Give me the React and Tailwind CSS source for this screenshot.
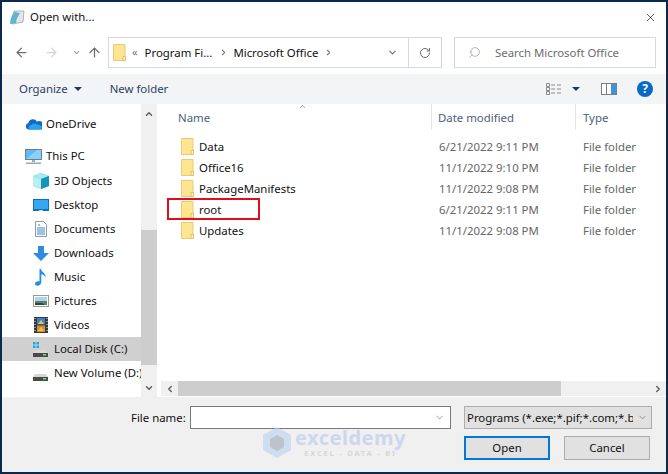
import React from 'react';
import { ArrowLeft, ArrowRight, ArrowUp, ChevronDown, ChevronUp, ChevronLeft, ChevronRight, RotateCw, Search, X } from 'lucide-react';

const files = [
  { name: 'Data', date: '6/21/2022 9:11 PM' },
  { name: 'Office16', date: '11/1/2022 9:10 PM' },
  { name: 'PackageManifests', date: '11/1/2022 9:08 PM' },
  { name: 'root', date: '6/21/2022 9:11 PM' },
  { name: 'Updates', date: '11/1/2022 9:08 PM' },
];

function Folder() {
  return (
    <svg width="13" height="17" viewBox="0 0 13 17" className="shrink-0">
      <path d="M.5.5h11.5v16H.5z" fill="#fde591" stroke="#e9cb73" />
      <path d="M10 12.500h2.500v4H10z" fill="#fff3c4" stroke="#e3bf5e" />
    </svg>
  );
}

function OneDriveIcon() {
  return (
    <svg width="17" height="12" viewBox="0 0 17 12">
      <path d="M4 11.500a3.300 3.300 0 0 1-.6-6.500 4.600 4.600 0 0 1 8.600-1.300 3.800 3.800 0 0 1 4.700 7.800z" fill="#0f6cc4" />
      <path d="M4 11.500h11.800c1-.6 1.200-2.300.6-3.300-1.200-1.700-4-1.300-5-1.900-2-1.500-4-1-5 .7-2.200 0-3.500 2.500-2.400 4.500z" fill="#2aa3ec" />
    </svg>
  );
}

function PcIcon() {
  return (
    <svg width="17" height="15" viewBox="0 0 17 15">
      <rect x=".5" y=".5" width="16" height="10" fill="#5fb9f2" stroke="#6b7f91" />
      <path d="M1 10 12 1h4v9z" fill="#8ad0f7" />
      <path d="M7 11h3v2H7z" fill="#9eb0be" />
      <path d="M1 13.500h15V15H1z" fill="#9aa9b5" />
    </svg>
  );
}

function CubeIcon() {
  return (
    <svg width="16" height="16" viewBox="0 0 16 16">
      <path d="M8 0 16 3v10l-8 3-8-3V3z" fill="#3dc3d8" />
      <path d="M8 0 16 3 8 6 0 3z" fill="#a5ecf2" />
      <path d="M0 3l8 3v10l-8-3z" fill="#b6f0f2" />
      <path d="M8 6l8-3v10l-8 3z" fill="#1595b5" />
    </svg>
  );
}

function DesktopIcon() {
  return (
    <svg width="16" height="12" viewBox="0 0 16 12">
      <rect width="16" height="12" fill="#0d6fbd" />
      <rect x="1" y="1" width="14" height="9" fill="#34a6f2" />
      <path d="M6 11h4v1H6z" fill="#bfe2f8" />
    </svg>
  );
}

function DocumentIcon() {
  return (
    <svg width="12" height="16" viewBox="0 0 12 16" className="ml-[2px]">
      <path d="M.5.5h8l3 3v12H.500z" fill="#fff" stroke="#8e9aa5" />
      <path d="M3 4h2M2 7h8M2 9h8M2 11h8M2 13h8" stroke="#3b87c6" />
    </svg>
  );
}

function DownloadIcon() {
  return (
    <svg width="16" height="15" viewBox="0 0 16 15">
      <path d="M5 0h6v7h5l-8 8-8-8h5z" fill="#2f8ae0" />
    </svg>
  );
}

function MusicIcon() {
  return (
    <svg width="12" height="17" viewBox="0 0 12 17" className="ml-[2px]">
      <path d="M4.500 0h1.500c.3 3 5 4 4.600 8.500C9.800 6.500 8 5.500 6.300 5.300V13c0 2.300-2 3.700-4 3.700-3 0-3-3.500-.3-4.300.8-.2 1.800-.2 2.500.2z" fill="#1f8fe8" />
    </svg>
  );
}

function PictureIcon() {
  return (
    <svg width="16" height="12" viewBox="0 0 16 12">
      <rect x=".5" y=".5" width="15" height="11" fill="#fff" stroke="#9a9a9a" />
      <rect x="2" y="2" width="12" height="4" fill="#a9d8ee" />
      <path d="M2 6h12v4H2z" fill="#5d8068" />
      <path d="M2 8h7l3 2H2z" fill="#2b4a3a" />
    </svg>
  );
}

function VideoIcon() {
  return (
    <svg width="14" height="16" viewBox="0 0 14 16" className="ml-px">
      <rect width="14" height="16" fill="#35393d" />
      <rect x="3" y="1" width="8" height="6.500" fill="#3a7fd0" />
      <rect x="3" y="8.500" width="8" height="6.500" fill="#d98d2e" />
      <path d="M4 7l3-4 3 4zM4 14l3-4 3 4z" fill="#e3c64a" />
      <path d="M1 1v1M1 4v1M1 7v1M1 10v1M1 13v1M13 1v1M13 4v1M13 7v1M13 10v1M13 13v1" stroke="#e5e5e5" />
    </svg>
  );
}

function DiskIcon({ windows }) {
  return (
    <svg width="15" height="15" viewBox="0 0 15 15">
      {windows && <path d="M0 0h2.500v2.500H0zM3.500 0H6v2.500H3.500zM0 3.500h2.500V6H0zM3.500 3.500H6V6H3.500z" fill="#19a7e8" />}
      <path d="M2 8h11l2 3H0z" fill="#d7d7d7" />
      <rect y="11" width="15" height="4" fill="#4a4a4a" />
      <rect x="10" y="12" width="3" height="1.500" fill="#7ed957" />
    </svg>
  );
}

function NavRow({ icon, label, indent, active }) {
  return (
    <div className={`flex items-center h-6 ${active ? 'bg-[#d0d0d0]' : ''} ${indent ? 'pl-[31px]' : 'pl-[23px]'}`}>
      <div className="w-[21px] shrink-0 flex items-center">{icon}</div>
      <span className="whitespace-nowrap">{label}</span>
    </div>
  );
}

export default function App() {
  return (
    <div className="w-[668px] h-[474px] relative overflow-hidden border-2 border-[#0b2a49] bg-white text-[11.4px] text-[#111] flex flex-col font-['Noto_Sans',sans-serif]">
      {/* title bar */}
      <div className="h-[30px] shrink-0 flex items-center pl-[7px] pr-[6px]">
        <svg width="16" height="15" viewBox="0 0 16 15" className="mr-[5px]">
          <path d="M5 1h10l-1 11-11 2z" fill="#e3e7e8" stroke="#8f989c" strokeWidth=".7" />
          <path d="M1 14c0-5 2-9 4-12l6 1c-2 3-4 7-4 10z" fill="#62b5cf" />
        </svg>
        <span className="flex-1">Open with...</span>
        <X size={13} strokeWidth={1.2} className="text-black mr-[3px]" />
      </div>

      {/* address row */}
      <div className="h-[42px] shrink-0 flex items-start pt-[5px] pl-[12px] text-[#3b3b3b]">
        <div className="h-[31px] flex items-center">
          <ArrowLeft size={15} strokeWidth={2} className="text-[#6d6d6d]" />
          <ArrowRight size={15} strokeWidth={2} className="text-[#d4d4d4] ml-[15px]" />
          <ChevronDown size={9} strokeWidth={3} className="text-[#a0a0a0] ml-[13px]" />
          <ArrowUp size={15} strokeWidth={2} className="text-[#6d6d6d] ml-[6px]" />
        </div>
        <div className="ml-[6px] w-[334px] h-[31px] border border-[#d9d9d9] flex items-center text-[#111]">
          <div className="ml-[4px] w-[13px]"><Folder /></div>
          <span className="ml-[6px] text-[11px] text-[#777]">«</span>
          <span className="ml-[7px]">Program Fi...</span>
          <ChevronRight size={9} strokeWidth={3} className="ml-[7px] text-[#7a7a7a]" />
          <span className="ml-[5px]">Microsoft Office</span>
          <ChevronRight size={9} strokeWidth={3} className="ml-[6px] text-[#7a7a7a]" />
          <div className="flex-1" />
          <ChevronDown size={11} strokeWidth={2.5} className="mr-[10px] text-[#6d6d6d]" />
          <div className="w-[33px] h-full border-l border-[#d9d9d9] flex items-center justify-center">
            <RotateCw size={12} strokeWidth={2} className="text-[#6d6d6d]" />
          </div>
        </div>
        <div className="ml-[12px] w-[202px] h-[31px] border border-[#d9d9d9] flex items-center text-[#6d6d6d]">
          <Search size={13} strokeWidth={1} className="ml-[13px] -scale-x-100 text-[#777]" />
          <span className="ml-[14px]">Search Microsoft Office</span>
        </div>
      </div>

      {/* toolbar */}
      <div className="h-[30px] shrink-0 bg-[#f3f4f6] flex items-center text-[#2b3f66]">
        <span className="ml-[17px]">Organize</span>
        <span className="ml-[6px] w-0 h-0 border-x-[4px] border-x-transparent border-t-[4px] border-t-[#1f3a63]" />
        <span className="ml-[28px]">New folder</span>
        <div className="flex-1" />
        <svg width="16" height="13" viewBox="0 0 16 13">
          <path d="M.5.5h3v3h-3zM.5 4.500h3v3h-3zM.5 8.500h3v3h-3z" fill="none" stroke="#8a8a8a" />
          <path d="M5 2h4M11 2h4M5 6h4M11 6h4M5 10h4M11 10h4" stroke="#8a8a8a" />
        </svg>
        <span className="ml-[10px] w-0 h-0 border-x-[4px] border-x-transparent border-t-[4px] border-t-[#1f3a63]" />
        <svg width="16" height="12" viewBox="0 0 16 12" className="ml-[21px]">
          <rect x=".5" y=".5" width="15" height="11" fill="#fff" stroke="#7d7d7d" />
          <rect x="10" y="1" width="5" height="10" fill="#3b94e0" />
          <path d="M5.500 1v10" stroke="#7d7d7d" />
        </svg>
        <div className="ml-[20px] mr-[13px] w-4 h-4 rounded-full bg-[#0a69c4] text-white text-[12px] font-bold flex items-center justify-center leading-none">?</div>
      </div>

      {/* main */}
      <div className="flex-1 flex min-h-0">
        <div className="w-[139px] shrink-0 overflow-hidden flex flex-col pt-[8px]">
          <NavRow icon={<OneDriveIcon />} label="OneDrive" />
          <div className="h-2 shrink-0" />
          <NavRow icon={<PcIcon />} label="This PC" />
          <div className="h-px shrink-0" />
          <NavRow icon={<CubeIcon />} label="3D Objects" indent />
          <NavRow icon={<DesktopIcon />} label="Desktop" indent />
          <NavRow icon={<DocumentIcon />} label="Documents" indent />
          <NavRow icon={<DownloadIcon />} label="Downloads" indent />
          <NavRow icon={<MusicIcon />} label="Music" indent />
          <NavRow icon={<PictureIcon />} label="Pictures" indent />
          <NavRow icon={<VideoIcon />} label="Videos" indent />
          <NavRow icon={<DiskIcon windows />} label="Local Disk (C:)" indent active />
          <NavRow icon={<DiskIcon />} label="New Volume (D:)" indent />
        </div>

        {/* sidebar scrollbar */}
        <div className="w-4 shrink-0 bg-[#f0f0f0] flex flex-col items-center text-[#606060]">
          <ChevronUp size={10} strokeWidth={3.5} className="mt-[5px] mb-[111px]" />
          <div className="w-full h-[135px] bg-[#cdcdcd]" />
          <div className="flex-1" />
          <ChevronDown size={10} strokeWidth={3.5} className="mb-[4px]" />
        </div>

        {/* file list */}
        <div className="flex-1 min-w-0 flex flex-col ml-[2px]">
          <div className="h-[26px] shrink-0 flex text-[#4c607a] relative">
            <div className="w-[273px] pl-[19px] pt-px flex items-center border-r border-[#e5e5e5]">Name</div>
            <ChevronUp size={9} strokeWidth={1.5} className="absolute left-[139px] top-[-2px] text-[#555]" />
            <div className="w-[144px] pl-[6px] pt-px flex items-center border-r border-[#e5e5e5]">Date modified</div>
            <div className="pl-[7px] pt-px flex items-center">Type</div>
          </div>
          <div className="flex-1 pt-[6px]">
            {files.map((f) => (
              <div key={f.name} className="h-[21px] flex items-center">
                <div className="w-[273px] flex items-center pl-[22px] shrink-0">
                  <Folder />
                  <span className="ml-[5px]">{f.name}</span>
                </div>
                <div className="w-[144px] pl-[7px] text-[#666] shrink-0">{f.date}</div>
                <div className="pl-[7px] text-[#666] whitespace-nowrap">File folder</div>
              </div>
            ))}
          </div>
          <div className="h-[15px] shrink-0 mb-[1px] ml-[2px] flex bg-[#f0f0f0] items-center text-[#606060]">
            <div className="w-[17px] flex justify-center"><ChevronLeft size={10} strokeWidth={3.5} /></div>
            <div className="w-[383px] h-full bg-[#cdcdcd]" />
            <div className="flex-1" />
            <ChevronRight size={10} strokeWidth={3.5} className="mr-[3px]" />
          </div>
        </div>
      </div>

      {/* footer */}
      <div className="h-[75px] shrink-0 bg-[#f0f0f0] relative">
        <div className="flex items-center pt-[9px]">
          <span className="ml-[129px] w-[59px]">File name:</span>
          <div className="w-[261px] h-[23px] bg-white border border-[#7a7a7a] flex items-center justify-end pr-[5px]">
            <ChevronDown size={11} strokeWidth={1.2} className="text-[#555]" />
          </div>
          <div className="ml-[13px] w-[188px] h-[23px] bg-[#e1e1e1] border border-[#adadad] flex items-center pl-[2px] overflow-hidden">
            <span className="w-[166px] overflow-hidden whitespace-nowrap">Programs (*.exe;*.pif;*.com;*.bat;*.cmd)</span>
            <ChevronDown size={11} strokeWidth={1.2} className="ml-[4px] shrink-0 text-[#555]" />
          </div>
        </div>
        <div className="flex pt-[7px] pl-[462px] gap-[14px]">
          <button className="w-[86px] h-[24px] bg-[#e1e1e1] border-2 border-[#0078d7]">Open</button>
          <button className="w-[86px] h-[24px] bg-[#e1e1e1] border border-[#adadad]">Cancel</button>
        </div>
      </div>

      {/* red annotation box */}
      <div className="absolute left-[165px] top-[196px] w-[93px] h-[22px] border-2 border-[#e00d1a]" />

      {/* watermark */}
      <div className="absolute left-[261px] top-[425px] flex items-center opacity-60">
        <svg width="28" height="31" viewBox="0 0 28 31">
          <path d="M14 0 28 8v15l-14 8L0 23V8z" fill="#bcd0ef" />
          <path d="M14 8 21 12v8l-7 4-7-4v-8z" fill="#9aa6b5" />
        </svg>
        <div className="ml-[4px] flex flex-col items-center">
          <span className="text-[20px] font-bold text-[#b5c8ee] leading-[21px] tracking-[0.5px]">exceldemy</span>
          <span className="text-[7.500px] font-bold text-[#c8c8c8] tracking-[1.8px] leading-[10px]">EXCEL - DATA - BI</span>
        </div>
      </div>
    </div>
  );
}
